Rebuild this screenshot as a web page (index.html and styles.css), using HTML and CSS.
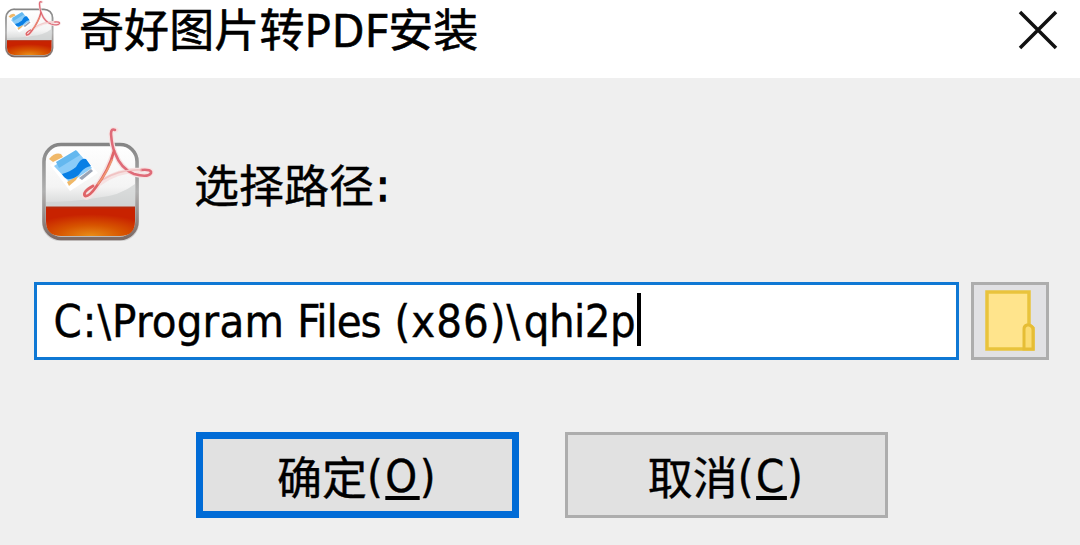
FILE: index.html
```html
<!DOCTYPE html>
<html lang="zh-CN">

<head>
	<meta charset="utf-8">
	<title>奇好图片转PDF安装</title>
	<link rel="stylesheet" href="styles.css">
</head>

<body>

<!-- shared artwork, used in the title bar and in the dialog -->
<svg class="defs" width="0" height="0">
	<defs>
		<linearGradient id="glass" x1="0" y1="0" x2="0" y2="1">
			<stop offset="0" stop-color="#ffffff"/>
			<stop offset="0.45" stop-color="#f4f4f4"/>
			<stop offset="0.68" stop-color="#d2d4d4"/>
		</linearGradient>
		<linearGradient id="rim" x1="0" y1="0" x2="0" y2="1">
			<stop offset="0" stop-color="#858585"/>
			<stop offset="0.5" stop-color="#b0b0b0"/>
			<stop offset="1" stop-color="#7c6a65"/>
		</linearGradient>
		<radialGradient id="liquid" cx="0.5" cy="1" r="0.75">
			<stop offset="0" stop-color="#e88d18"/>
			<stop offset="0.5" stop-color="#d75400"/>
			<stop offset="1" stop-color="#c82200"/>
		</radialGradient>
		<symbol id="appIcon" viewBox="0 0 120 120">
			<rect x="6" y="19" width="97" height="96" rx="18" fill="#8a8a8a" opacity="0.3"/>
			<rect x="8" y="18.500" width="93" height="94" rx="17" fill="url(#glass)" stroke="url(#rim)" stroke-width="3.500"/>
			<path d="M60 72 Q84 70 99 58 V80 H10 V76 Q36 76 60 72Z" fill="#cfd1d1" opacity="0.7"/>
			<path d="M10 81 H99 V95 Q99 110 84 110 H25 Q10 110 10 95Z" fill="url(#liquid)"/>
			<path d="M10 81.500 H99" stroke="#b52c10" stroke-width="2"/>
			<path d="M14 39 L41 22 L62 47 L34 65Z" fill="#ffffff"/>
			<path d="M13 33 Q19 26 25 28 L27 31 L17 36Z" fill="#f0b868"/>
			<path d="M18 40 L41 25 L56 42 L34 57Z" fill="#8bccf8"/>
			<path d="M20 36 L40 24 L44 29 L23 42Z" fill="#64b8ef"/>
			<path d="M26 48 Q34 46 40 41 Q45 31 50 33 L55 40 Q49 41 45 46 Q41 52 34 53 Q29 54 26 48Z" fill="#087fe5"/>
			<path d="M31 56 L42 50 L40 54 L33 60Z" fill="#f0b868"/>
			<path d="M43 52 L55 43 L57 45 L46 54Z" fill="#9aa4b5"/>
			<g fill="none" stroke-linecap="round" stroke-linejoin="round">
				<path d="M80 4 Q75 2 75 8 Q76 21 79 27 Q85 43 98 48 Q112 52 115 47 Q116 43 105 44 Q82 44 64 57 Q48 65 48 70 Q52 75 60 62 Q76 35 78 24" stroke="#f6e2e2" stroke-width="5"/>
				<path d="M79 4 Q75 2 75 8 Q76 21 79 27 Q85 43 98 48 Q112 52 115 47 Q116 43 105 44" stroke="#df6b78" stroke-width="2.600"/>
				<path d="M105 44 Q84 43 66 54" stroke="#f0c3c3" stroke-width="1.600"/>
				<path d="M78 25 Q73 44 60 61 Q53 71 49 70 Q46 66 57 60" stroke="#df6468" stroke-width="2.800"/>
				<path d="M76 34 Q70 48 62 58" stroke="#f09a70" stroke-width="1.600"/>
			</g>
		</symbol>
	</defs>
</svg>

<div class="dialog">

	<!-- title bar -->
	<div class="titleBar">
		<svg class="titleIcon"><use href="#appIcon"/></svg>
		<div class="titleText">奇好图片转PDF安装</div>
		<svg class="closeIcon" viewBox="0 0 40 40">
			<path d="M2 2 L38 38 M38 2 L2 38"/>
		</svg>
	</div>

	<!-- icon and prompt -->
	<div class="promptRow">
		<svg class="promptIcon"><use href="#appIcon"/></svg>
		<div class="promptText">选择路径<span class="colon">:</span></div>
	</div>

	<!-- install path -->
	<div class="pathRow">
		<div class="pathField"><span class="pathText"><span class="drive">C:\</span><span class="program">Program </span><span class="files">Files </span><span class="arch">(x86)\</span><span class="folder">qhi2p</span></span><span class="caret"></span></div>
		<div class="browseButton">
			<svg class="folderIcon" viewBox="0 0 50 62">
				<path d="M2 2 H44 V35 L48 38 V59 H2Z" fill="#ffe48c" stroke="#e9c33c" stroke-width="3.500"/>
				<path d="M39 59 V39 Q39 36 42 35 H44 Q48 36 48 40 V59Z" fill="#fbdc73" stroke="#e6bd35" stroke-width="3"/>
			</svg>
		</div>
	</div>

	<!-- buttons -->
	<div class="buttonRow">
		<div class="button defaultButton"><span class="buttonText">确定<span class="shortcut">(<span class="key">O</span>)</span></span></div>
		<div class="button"><span class="buttonText">取消<span class="shortcut">(<span class="key">C</span>)</span></span></div>
	</div>

</div>

</body>
</html>
```

FILE: styles.css
```css
body
{
	margin: 0;
	font-family: "Noto Sans", "Noto Sans CJK SC", sans-serif;
	font-size: 45px;
	line-height: 60px;
	color: #000000;
}

.defs
{
	display: block;
}

.dialog
{
	width: 1080px;
	height: 545px;
	overflow: hidden;
	background: #efefef;
}

.titleBar
{
	display: flex;
	align-items: flex-start;
	height: 78px;
	box-sizing: border-box;
	padding: 0 22px 0 2px;
	background: #ffffff;
}

.titleIcon
{
	width: 60px;
	height: 60px;
	flex: none;
}

.titleText
{
	flex: 1;
	padding-left: 17px;
	white-space: nowrap;
	letter-spacing: 0.1px;
	-webkit-text-stroke: 0.6px #000000;
}

.closeIcon
{
	width: 40px;
	height: 40px;
	margin-top: 10px;
	fill: none;
	stroke: #111111;
	stroke-width: 3.5px;
}

.promptRow
{
	display: flex;
	align-items: center;
	height: 120px;
	padding: 48px 0 0 36px;
}

.promptIcon
{
	width: 120px;
	height: 120px;
	flex: none;
}

.promptText
{
	padding-left: 38px;
	-webkit-text-stroke: 0.4px #000000;
}

.colon, .pathText, .shortcut
{
	font-family: "DejaVu Sans Condensed", "DejaVu Sans", sans-serif;
	font-stretch: condensed;
}

.colon
{
	padding-left: 2px;
	vertical-align: 2px;
	line-height: 0;
	-webkit-text-stroke: 1.5px #000000;
}

.pathRow
{
	display: flex;
	gap: 12px;
	padding: 36px 0 0 34px;
}

.pathField
{
	display: flex;
	align-items: center;
	box-sizing: border-box;
	width: 925px;
	height: 78px;
	padding-left: 16.5px;
	border: 3px solid #0f78d4;
	background: #ffffff;
	white-space: pre;
}

.pathText
{
	padding-top: 2px;
	-webkit-text-stroke: 0.4px #000000;
}

.drive
{
	letter-spacing: 1px;
}

.program
{
	letter-spacing: 0.2px;
}

.files
{
	letter-spacing: -1px;
}

.arch
{
	margin-left: 2px;
	letter-spacing: 1px;
}

.folder
{
	margin-left: 2.5px;
	letter-spacing: -0.5px;
}

.caret
{
	width: 4px;
	height: 53px;
	margin: 0 0 4px 2px;
	background: #000000;
}

.browseButton
{
	display: flex;
	align-items: center;
	justify-content: center;
	box-sizing: border-box;
	width: 78px;
	height: 78px;
	border: 3px solid #adadad;
	background: #e1e1e4;
}

.folderIcon
{
	width: 50px;
	height: 62px;
}

.buttonRow
{
	display: flex;
	gap: 46px;
	padding: 72px 0 0 196px;
}

.button
{
	display: flex;
	align-items: center;
	justify-content: center;
	box-sizing: border-box;
	width: 323px;
	height: 86px;
	padding-top: 6px;
	border: 3px solid #adadad;
	background: #e1e1e1;
}

.defaultButton
{
	border: 7px solid #006bd6;
}

.buttonText
{
	-webkit-text-stroke: 0.4px #000000;
}

.shortcut
{
	letter-spacing: 2.5px;
	vertical-align: 3px;
	line-height: 0;
}

.key
{
	text-decoration: underline;
	text-decoration-thickness: 4px;
	text-underline-offset: 4px;
	text-decoration-skip-ink: none;
}
```
